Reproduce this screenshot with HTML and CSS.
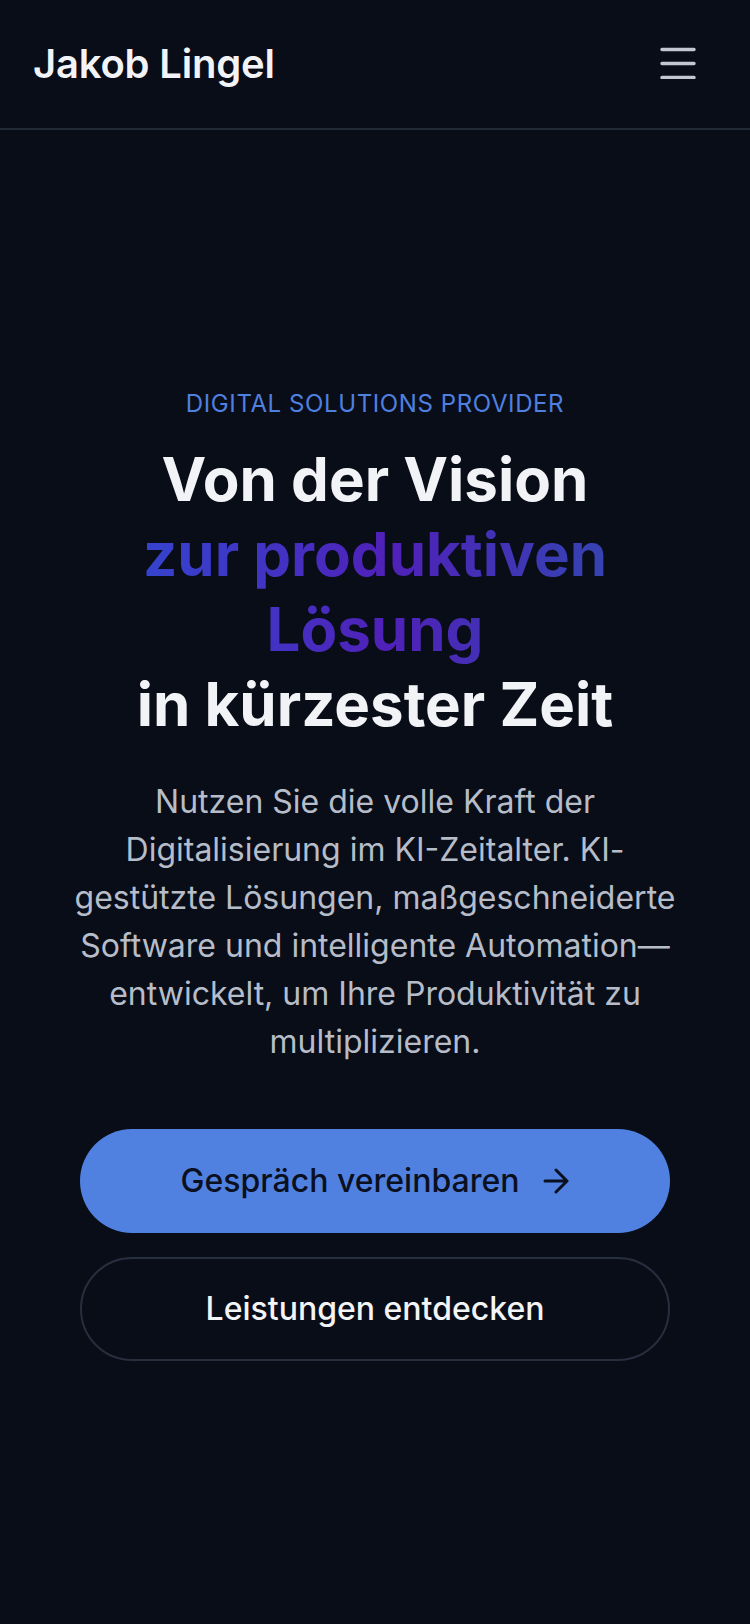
FILE: index.html
```html
<!DOCTYPE html>
<html lang="de">
<head>
<meta charset="utf-8">
<meta name="viewport" content="width=750">
<title>Jakob Lingel</title>
<link rel="stylesheet" href="styles.css">
</head>
<body>
<header class="site-header">
  <div class="logo">Jakob Lingel</div>
  <button class="menu-btn" aria-label="Menü">
    <svg width="36" height="32" viewBox="0 0 36 32" fill="none" stroke="#c2c8d2" stroke-width="3.4" stroke-linecap="round">
      <path d="M2 2.5h32M2 16.5h32M2 30.5h32"/>
    </svg>
  </button>
</header>
<main class="hero">
  <p class="eyebrow">DIGITAL SOLUTIONS PROVIDER</p>
  <h1 class="headline">
    <span class="line">Von der Vision</span>
    <span class="line gradient">zur produktiven Lösung</span>
    <span class="line">in kürzester Zeit</span>
  </h1>
  <p class="lead">Nutzen Sie die volle Kraft der Digitalisierung im KI-Zeitalter. KI-gestützte Lösungen, maßgeschneiderte Software und intelligente Automation—entwickelt, um Ihre Produktivität zu multiplizieren.</p>
  <div class="actions">
    <a class="btn btn-primary" href="#kontakt">Gespräch vereinbaren
      <svg class="arrow" width="26" height="26" viewBox="0 0 26 26" fill="none" stroke="#0b1020" stroke-width="3" stroke-linecap="round" stroke-linejoin="round">
        <path d="M2 13h22M13 2l11 11-11 11"/>
      </svg>
    </a>
    <a class="btn btn-secondary" href="#leistungen">Leistungen entdecken</a>
  </div>
</main>
</body>
</html>
```
FILE: styles.css
```css
* { box-sizing: border-box; }
html, body { margin: 0; padding: 0; }
body {
  background: #090d18;
  font-family: Inter, "Noto Sans", sans-serif;
  color: #f1f3f7;
  width: 750px;
  min-height: 1624px;
}
.site-header {
  height: 130px;
  border-bottom: 2px solid #222937;
  display: flex;
  align-items: center;
  justify-content: space-between;
  padding: 0 54px 0 33px;
}
.logo {
  font-size: 40px;
  line-height: 48px;
  font-weight: 600;
  color: #f1f3f7;
  letter-spacing: -0.2px;
}
.menu-btn {
  background: none;
  border: 0;
  padding: 0;
  margin: 0;
  display: flex;
  margin-top: -2px;
}
.hero {
  height: 1494px;
  display: flex;
  flex-direction: column;
  align-items: center;
  justify-content: center;
  text-align: center;
  padding: 0 48px 4px;
}
.eyebrow {
  margin: 0 0 24px;
  font-size: 24px;
  line-height: 28px;
  color: #4f80e0;
  letter-spacing: 0.6px;
  font-weight: 400;
}
.headline {
  margin: 0;
  font-size: 60px;
  line-height: 75px;
  font-weight: 700;
  color: #f1f3f7;
  letter-spacing: 0;
  width: 654px;
}
.line { display: block; }
.gradient {
  background: linear-gradient(90deg, #2c4ed4 0%, #3f37c6 30%, #5020b8 52%, #3a3cb4 78%, #2f52ae 100%);
  -webkit-background-clip: text;
  background-clip: text;
  color: transparent;
}
.lead {
  margin: 36px 0 0;
  width: 620px;
  font-size: 32px;
  line-height: 48px;
  color: #b6bdc9;
  font-weight: 400;
}
.actions {
  margin-top: 63px;
  width: 590px;
  display: flex;
  flex-direction: column;
  gap: 24px;
}
.btn {
  height: 104px;
  border-radius: 52px;
  display: flex;
  align-items: center;
  justify-content: center;
  gap: 24px;
  font-size: 32px;
  font-weight: 500;
  text-decoration: none;
}
.btn-primary {
  background: #5181e0;
  color: #0b1020;
}
.btn-secondary {
  border: 2px solid #272e3d;
  color: #f3f4f6;
}
.arrow { flex: none; }
```
